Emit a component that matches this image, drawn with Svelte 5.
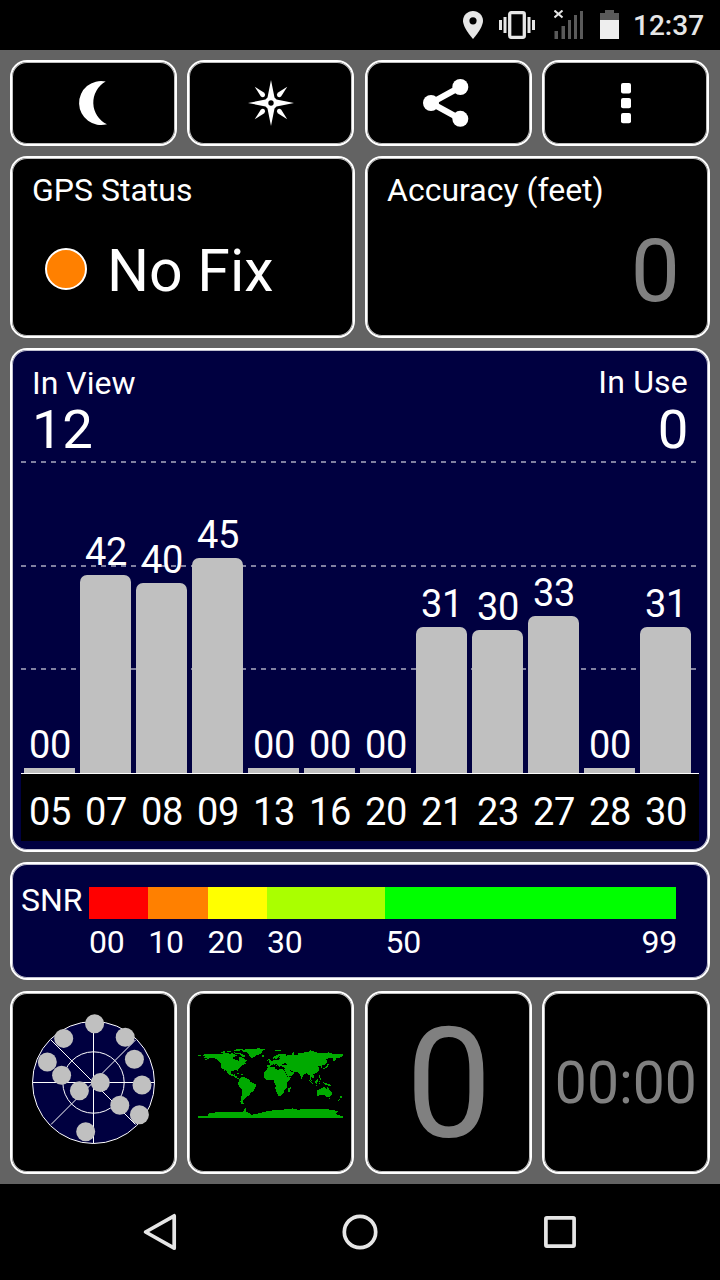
<script lang="ts">
	type Satellite = { prn: string; snr: string; height: number }

	/**
	 * satellites in view, height is the bar height in px
	 */
	const satellites: Satellite[] = [
		{ prn: '05', snr: '00', height: 5 },
		{ prn: '07', snr: '42', height: 198 },
		{ prn: '08', snr: '40', height: 190 },
		{ prn: '09', snr: '45', height: 215 },
		{ prn: '13', snr: '00', height: 5 },
		{ prn: '16', snr: '00', height: 5 },
		{ prn: '20', snr: '00', height: 5 },
		{ prn: '21', snr: '31', height: 146 },
		{ prn: '23', snr: '30', height: 143 },
		{ prn: '27', snr: '33', height: 157 },
		{ prn: '28', snr: '00', height: 5 },
		{ prn: '30', snr: '31', height: 146 }
	]

	const gridLines = [103, 207, 310]

	/**
	 * signal to noise scale, span is in dB
	 */
	const scale = [
		{ from: '00', span: 10, color: '#ff0000' },
		{ from: '10', span: 10, color: '#ff8000' },
		{ from: '20', span: 10, color: '#ffff00' },
		{ from: '30', span: 20, color: '#aaff00' },
		{ from: '50', span: 49, color: '#00ff00' }
	]

	/**
	 * sky positions
	 */
	const dots = [
		[84.6, 32.7],
		[115.2, 46.3],
		[124.4, 68.2],
		[132, 94],
		[129.4, 123.7],
		[109.8, 114.3],
		[90.3, 91.6],
		[69.4, 99.7],
		[51.6, 84.2],
		[37.3, 71],
		[53.7, 47.4],
		[75.7, 140.8]
	]

	/**
	 * coastlines as longitude, -latitude
	 */
	const land = [
		// north america
		'-168,-66 -166,-69 -156,-71 -141,-70 -128,-70 -115,-69 -106,-69 -95,-72 -88,-68 -82,-69 -82,-66 -87,-64 -94,-60 -92,-57 -82,-55 -80,-51 -78,-55 -77,-59 -78,-62 -72,-62 -65,-58 -60,-55 -56,-52 -66,-50 -60,-46 -66,-44 -70,-42 -75,-38 -76,-35 -81,-31 -80,-26 -82,-27 -84,-30 -90,-29 -97,-27 -97,-20 -91,-18 -87,-21 -88,-16 -83,-15 -83,-10 -77,-9 -77,-7 -83,-8 -92,-14 -105,-20 -107,-24 -113,-31 -115,-30 -110,-23 -112,-25 -117,-32 -121,-35 -124,-40 -124,-48 -130,-54 -140,-60 -150,-60 -155,-57 -163,-55 -158,-59 -165,-61 -161,-64',
		'-180,-69 -175,-67 -171,-66 -174,-64 -180,-65',
		// arctic islands
		'-125,-72 -120,-76 -116,-74 -106,-73 -102,-70 -110,-69 -117,-70 -119,-72',
		'-90,-74 -80,-73 -72,-71 -62,-66 -65,-62 -74,-65 -72,-68 -80,-70 -88,-71',
		'-92,-78 -88,-81 -78,-83 -62,-83 -72,-80 -79,-77 -84,-79 -88,-76',
		'-118,-77 -110,-76 -98,-77 -98,-75 -115,-75',
		// greenland
		'-72,-78 -60,-82 -45,-83 -28,-84 -12,-82 -20,-78 -20,-73 -25,-70 -36,-66 -42,-62 -44,-60 -50,-62 -54,-68 -58,-75 -68,-76',
		'-24,-65 -20,-67 -14,-66 -15,-64 -20,-63',
		// caribbean
		'-85,-22 -82,-23 -74,-20 -77,-20',
		'-74,-20 -68,-19 -71,-17 -74,-18',
		// south america
		'-77,-8 -72,-12 -62,-11 -52,-5 -50,0 -44,2 -35,6 -35,9 -39,15 -41,22 -48,26 -53,34 -57,36 -62,39 -65,42 -67,46 -69,51 -66,55 -72,54 -75,50 -73,38 -71,30 -70,18 -76,14 -81,6 -80,0 -77,-4',
		// eurasia
		'-9,-43 -9,-37 -5,-36 0,-39 3,-43 8,-44 12,-42 16,-38 18,-40 12,-44 14,-46 19,-42 22,-37 24,-40 27,-40 29,-41 28,-46 33,-46 38,-47 41,-42 35,-42 28,-41 27,-37 36,-36 34,-30 39,-22 43,-13 52,-16 60,-22 56,-26 51,-25 48,-30 51,-29 57,-26 66,-25 72,-21 74,-15 77,-8 80,-13 81,-16 87,-21 91,-22 94,-17 98,-16 98,-8 103,-1 101,-6 100,-13 105,-9 109,-12 106,-20 110,-21 117,-24 122,-30 119,-35 122,-38 118,-39 121,-41 126,-39 126,-35 129,-36 128,-41 135,-44 140,-49 140,-54 136,-55 142,-59 155,-60 157,-51 162,-56 164,-61 172,-61 180,-65 180,-69 160,-70 150,-72 140,-73 128,-72 113,-74 104,-78 90,-75 80,-73 69,-73 68,-68 55,-69 44,-67 41,-66 34,-67 41,-68 30,-71 20,-70 12,-66 5,-62 6,-58 11,-59 13,-56 17,-58 18,-60 22,-65 25,-65 22,-61 29,-60 22,-58 20,-55 11,-54 8,-57 8,-54 2,-51 -4,-48 -1,-46 -2,-43',
		'-5,-50 1,-51 1,-53 -2,-56 -3,-59 -6,-57 -3,-54',
		'-10,-52 -6,-52 -6,-55 -9,-54',
		'11,-79 20,-80 28,-80 24,-78 16,-77',
		'52,-71 57,-74 68,-77 60,-75 57,-71',
		'94,-81 104,-80 100,-78',
		'138,-76 150,-75 144,-73',
		// japan
		'130,-34 137,-37 140,-41 141,-45 145,-44 142,-40 141,-36 136,-34 131,-31',
		'142,-54 144,-53 143,-46 142,-46',
		// africa
		'-6,-36 3,-37 10,-38 11,-34 19,-30 24,-33 33,-31 37,-22 43,-12 51,-12 47,-4 40,3 40,15 35,20 33,27 28,33 20,35 17,30 12,17 13,8 9,0 9,-4 5,-6 -7,-4 -13,-8 -17,-14 -16,-20 -14,-27 -9,-32',
		'44,16 50,13 50,17 47,25 44,24',
		// indonesia
		'95,-6 100,-2 106,4 106,6 101,3',
		'105,6 115,8 114,9 106,8',
		'109,-1 113,-3 117,-7 119,-5 117,0 115,4 110,3',
		'119,-1 125,-2 121,0 123,5 120,5',
		'120,-18 122,-18 122,-14 126,-8 124,-6 121,-11',
		'131,1 137,2 147,6 151,10 143,9 138,8 134,4',
		// oceania
		'114,22 122,18 129,14 136,12 136,15 140,17 142,11 146,19 153,26 151,34 147,38 140,37 136,34 131,31 124,33 116,35',
		'145,41 148,41 147,44',
		'173,34 179,38 175,42 172,39',
		'174,40 170,47 166,47',
		// antarctica
		'-180,85 -153,85 -157,80 -149,77 -120,75 -100,75 -76,76 -68,74 -66,69 -58,63 -62,68 -61,74 -50,79 -47,82 -34,80 -18,75 -1,72 15,70 32,69 50,67 55,66 70,70 80,67 110,67 135,67 152,70 169,73 162,78 168,83 180,85 180,90 -180,90'
	]
</script>

<div class="screen">
	<header class="status-bar">
		<svg class="pin" width="20" height="28" viewBox="0 0 20 28">
			<path fill="#e6e6e6" d="M10 0C4.5 0 0 4.4 0 9.8C0 17 10 28 10 28C10 28 20 17 20 9.8C20 4.4 15.5 0 10 0Z" />
			<circle cx="10" cy="9.8" r="3.6" />
		</svg>
		<svg class="vibrate" width="36" height="28" viewBox="0 0 36 28">
			<rect x="10.7" y="1.7" width="14.6" height="24.6" rx="1.5" fill="none" stroke="#e6e6e6" stroke-width="3.3" />
			<path fill="#e6e6e6" d="M0 9h3v10H0zM4.5 6h3v16h-3zM28.5 6h3v16h-3zM33 9h3v10h-3z" />
		</svg>
		<svg class="signal" width="30" height="29" viewBox="0 0 30 29">
			<path fill="#5a5a5a" d="M.5 21H4v8H.5zM7.5 16H11v13H7.5zM14 10h3v19h-3zM20 5h3v24h-3zM26 1h3v28h-3z" />
			<path d="M.5 .5l8 7M8.5 .5l-8 7" stroke="#e6e6e6" stroke-width="2" />
		</svg>
		<svg class="battery" width="19" height="29" viewBox="0 0 19 29">
			<path fill="#5a5a5a" d="M5 0h9v3h5v7H0V3h5z" />
			<path fill="#eee" d="M0 10h19v19H0z" />
		</svg>
		<span class="clock">12:37</span>
	</header>

	<main>
		<div class="halves">
			<div class="pair">
				<button class="panel tool" aria-label="Night mode">
					<svg width="53" height="46" viewBox="0 0 53 46">
						<path fill="#fff" d="M38.7 1.5A22 22 0 1 0 40 44.2A24 24 0 0 1 38.7 1.5Z" />
					</svg>
				</button>
				<button class="panel tool" aria-label="Compass">
					<svg width="53" height="46" viewBox="0 0 53 46">
						<g fill="#fff" transform="translate(27 23)">
							<path d="M0-23L3.5-5.5 5.5-3.5 23 0 5.5 3.5 3.5 5.5 0 23-3.5 5.5-5.5 3.5-23 0-5.5-3.5-3.5-5.5Z" />
							{#each [45, 135, 225, 315] as angle}
								<path d="M0-23L2.5-12Q2.3-9.5 0-9.2Q-2.3-9.5-2.5-12Z" transform="rotate({angle})" />
							{/each}
							<circle r="2.7" fill="#000" />
						</g>
					</svg>
				</button>
			</div>
			<div class="pair">
				<button class="panel tool" aria-label="Share">
					<svg width="53" height="46" viewBox="0 0 53 46">
						<path d="M38.3 7L9 23l29.3 16" fill="none" stroke="#fff" stroke-width="6" />
						<g fill="#fff">
							<circle cx="9" cy="23" r="8" />
							<circle cx="38.3" cy="7" r="8" />
							<circle cx="38.3" cy="38.8" r="8" />
						</g>
					</svg>
				</button>
				<button class="panel tool" aria-label="Menu">
					<svg width="53" height="46" viewBox="0 0 53 46">
						<g fill="#fff">
							<rect x="22" y="3" width="10" height="10.6" rx="2" />
							<rect x="22" y="18" width="10" height="10.3" rx="2" />
							<rect x="22" y="33" width="10" height="10.3" rx="2" />
						</g>
					</svg>
				</button>
			</div>
		</div>

		<div class="halves">
			<section class="panel info">
				<h2>GPS Status</h2>
				<div class="fix">
					<span class="led"></span>
					<span>No Fix</span>
				</div>
			</section>
			<section class="panel info">
				<h2>Accuracy (feet)</h2>
				<div class="accuracy">0</div>
			</section>
		</div>

		<section class="panel blue chart">
			<svg class="grid" width="678" height="400" viewBox="0 0 678 400">
				{#each gridLines as y}
					<line x1="0" x2="678" y1={y} y2={y} />
				{/each}
			</svg>
			<div class="totals">
				<div>
					<h2>In View</h2>
					<div class="count">12</div>
				</div>
				<div class="in-use">
					<h2>In Use</h2>
					<div class="count">0</div>
				</div>
			</div>
			<div class="bars">
				{#each satellites as sat}
					<div class="column">
						<span>{sat.snr}</span>
						<div class="bar" class:empty={sat.snr === '00'} style="height: {sat.height}px"></div>
					</div>
				{/each}
			</div>
			<div class="prns">
				{#each satellites as sat}
					<span>{sat.prn}</span>
				{/each}
			</div>
		</section>

		<section class="panel blue snr">
			<h2>SNR</h2>
			<div class="scale">
				{#each scale as step}
					<div class="step" style="flex-grow: {step.span}">
						<div class="swatch" style="background: {step.color}"></div>
						<div class="marks">
							<span>{step.from}</span>
							{#if step.from === '50'}
								<span class="max">99</span>
							{/if}
						</div>
					</div>
				{/each}
			</div>
		</section>

		<div class="halves last">
			<div class="pair">
				<section class="panel tile">
					<svg class="sky" width="167" height="183" viewBox="0 0 167 183">
						<g fill="none" stroke="#fff">
							<circle cx="83.5" cy="91.5" r="61" fill="#000040" />
							<circle cx="83.5" cy="91.5" r="30.7" />
							<path d="M22.5 91.5h122M83.5 30.5v122M41 49l84.5 84.5M125.5 49L41 133.5" />
						</g>
						{#each dots as [x, y]}
							<circle cx={x} cy={y} r="9.5" fill="#c0c0c0" />
						{/each}
					</svg>
				</section>
				<section class="panel tile">
					<svg class="world" width="145" height="72" viewBox="-180 -90 360 180" preserveAspectRatio="none">
						{#each land as points}
							<polygon {points} />
						{/each}
					</svg>
				</section>
			</div>
			<div class="pair">
				<section class="panel tile heading">0</section>
				<section class="panel tile timer"><span>00:00</span></section>
			</div>
		</div>
	</main>

	<nav>
		<svg width="40" height="40" viewBox="0 0 40 40"><path d="M34.2 3.8v32.4L5.6 20Z" /></svg>
		<svg width="40" height="40" viewBox="0 0 40 40"><circle cx="20" cy="20" r="15.7" /></svg>
		<svg width="40" height="40" viewBox="0 0 40 40"><rect x="5.9" y="5.9" width="28.2" height="28.2" rx="1" /></svg>
	</nav>
</div>

<style>
	:global(body) {
		background: #000;
	}

	.screen {
		display: flex;
		flex-direction: column;
		width: 720px;
		height: 1280px;
		overflow: hidden;
		background: #636363;
		color: #fff;
		font-family: Roboto, sans-serif;
	}

	.status-bar {
		display: flex;
		align-items: flex-start;
		box-sizing: border-box;
		height: 50px;
		padding: 10px 0 0 463px;
		background: #000;
	}

	.pin,
	.vibrate {
		margin-top: 1px;
	}

	.vibrate {
		margin-left: 16px;
	}

	.signal {
		margin-left: 19px;
	}

	.battery {
		margin-left: 16px;
	}

	.clock {
		margin-left: 14px;
		color: #e6e6e6;
		font-size: 28px;
		font-weight: 500;
		line-height: 32px;
	}

	main {
		display: grid;
		grid-template-rows: 86px 182px 504px 118px 184px;
		gap: 10px;
		height: 1114px;
		padding: 10px;
	}

	h2 {
		margin: 0;
		font-size: 32px;
		font-weight: 400;
		line-height: 32px;
	}

	.halves {
		display: grid;
		grid-template-columns: 345px 345px;
		gap: 10px;
	}

	.pair {
		display: grid;
		grid-template-columns: 167px 167px;
		gap: 10px;
	}

	.last {
		grid-template-rows: 183px;
		padding-top: 1px;
	}

	.last .pair {
		grid-template-rows: 183px;
	}

	.last .pair:last-child {
		grid-template-columns: 167px 168px;
	}

	.panel {
		box-sizing: border-box;
		border: 2px solid #fff;
		border-radius: 17px;
		background: #000;
		box-shadow: inset 0 0 0 1px rgba(255, 255, 255, 0.75);
		color: #fff;
	}

	.blue {
		background: #000040;
	}

	.tool,
	.tile {
		display: flex;
		align-items: center;
		justify-content: center;
		padding: 0;
	}

	.tool svg {
		overflow: visible;
	}

	.info {
		padding: 16px 20px;
	}

	.fix {
		display: flex;
		align-items: center;
		gap: 20px;
		margin: 34px 0 0 13px;
		font-size: 59px;
		line-height: 62px;
	}

	.led {
		box-sizing: border-box;
		width: 42px;
		height: 42px;
		margin-top: -4px;
		border: 2px solid #fff;
		border-radius: 50%;
		background: #ff8000;
	}

	.accuracy {
		margin: 21px 8px 0 0;
		color: #808080;
		font-size: 87.5px;
		line-height: 88px;
		text-align: right;
	}

	.chart {
		position: relative;
		display: flex;
		flex-direction: column;
		padding: 0 9px 9px;
	}

	.grid {
		position: absolute;
		top: 9px;
		left: 9px;
	}

	.grid line {
		stroke: #8080a0;
		stroke-width: 2;
		stroke-dasharray: 5 5;
	}

	.totals {
		display: flex;
		justify-content: space-between;
		height: 89px;
		padding: 17px 11px 0;
	}

	.in-use {
		margin-top: -1px;
		text-align: right;
	}

	.in-use h2 {
		letter-spacing: 0.2px;
	}

	.in-use .count {
		margin-top: 1px;
	}

	.count {
		font-size: 54.5px;
		line-height: 61px;
		letter-spacing: -0.5px;
	}

	.bars {
		z-index: 1;
		display: flex;
		flex: 1;
		align-items: flex-end;
		gap: 5px;
		padding-left: 3px;
		border-bottom: 1px solid #fff;
	}

	.column {
		display: flex;
		flex-direction: column;
		gap: 4px;
		width: 51px;
		font-size: 38px;
		line-height: 37px;
		letter-spacing: -0.4px;
		text-align: center;
	}

	.column span,
	.prns span {
		padding-left: 1px;
	}

	.bar {
		border-radius: 7px 7px 0 0;
		background: #c0c0c0;
	}

	.bar.empty {
		border-radius: 0;
	}

	.prns {
		display: flex;
		gap: 5px;
		height: 67px;
		padding-left: 3px;
		background: #000;
		font-size: 38px;
		line-height: 77px;
		letter-spacing: -0.4px;
		text-align: center;
	}

	.prns span {
		box-sizing: border-box;
		width: 51px;
	}

	.snr {
		display: flex;
		padding: 20px 0 0 9px;
	}

	.snr h2 {
		width: 68px;
	}

	.scale {
		display: flex;
		width: 587px;
		padding-top: 3px;
	}

	.step {
		flex-basis: 0;
		min-width: 0;
	}

	.swatch {
		height: 32px;
	}

	.marks {
		display: flex;
		justify-content: space-between;
		font-size: 32px;
		line-height: 46px;
		letter-spacing: -0.2px;
	}

	.max {
		margin-right: -1px;
	}

	.sky {
		flex: none;
	}

	.world {
		margin-bottom: 2px;
		fill: #00aa00;
		shape-rendering: crispEdges;
	}

	.heading {
		padding: 5px 0 0 1px;
		color: #808080;
		font-size: 153.6px;
		line-height: 160px;
	}

	.timer {
		color: #808080;
		font-size: 58.5px;
	}

	.timer span {
		transform: scaleX(0.975);
	}

	nav {
		display: flex;
		align-items: center;
		justify-content: space-between;
		height: 96px;
		padding: 0 140px;
		background: #000;
	}

	nav svg {
		fill: none;
		stroke: #e6e6e6;
		stroke-width: 3.7;
		stroke-linejoin: round;
	}
</style>
